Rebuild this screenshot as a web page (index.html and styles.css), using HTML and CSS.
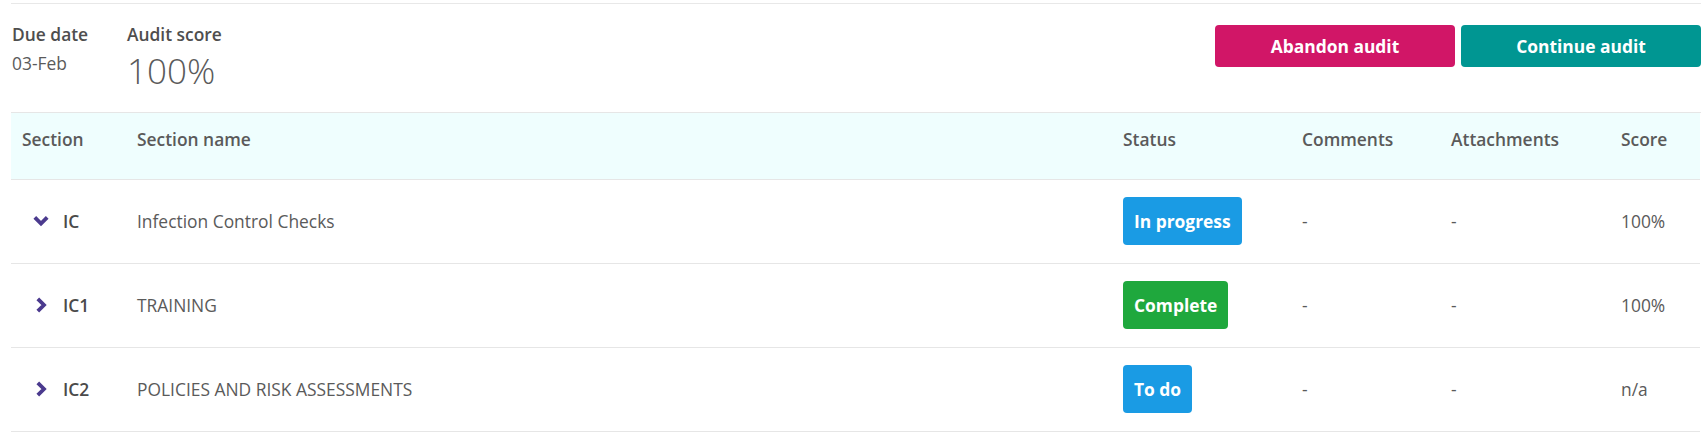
FILE: index.html
```html
<!DOCTYPE html>
<html lang="en">
<head>
    <meta charset="UTF-8">
    <meta name="viewport" content="width=device-width, initial-scale=1.0">
    <title>Audit</title>
    <link rel="stylesheet" href="styles.css">
</head>
<body>
    <div class="audit">
        <div class="summary">
            <div class="facts">
                <div class="fact due">
                    <div class="fact-label">Due date</div>
                    <div class="fact-value">03-Feb</div>
                </div>
                <div class="fact">
                    <div class="fact-label">Audit score</div>
                    <div class="fact-value big">100%</div>
                </div>
            </div>
            <div class="actions">
                <button class="button abandon">Abandon audit</button>
                <button class="button continue">Continue audit</button>
            </div>
        </div>

        <div class="sections">
            <div class="row head">
                <div class="cell">Section</div>
                <div class="cell">Section name</div>
                <div class="cell">Status</div>
                <div class="cell">Comments</div>
                <div class="cell">Attachments</div>
                <div class="cell">Score</div>
            </div>

            <div class="row">
                <div class="cell code">
                    <span class="toggle">
                        <svg width="16" height="16" viewBox="0 0 16 16"><path d="M1.8 4.3 L8 10.5 L14.2 4.3" fill="none" stroke="#4b3a8e" stroke-width="3.8"/></svg>
                    </span>
                    IC
                </div>
                <div class="cell">Infection Control Checks</div>
                <div class="cell"><span class="badge blue">In progress</span></div>
                <div class="cell">-</div>
                <div class="cell">-</div>
                <div class="cell">100%</div>
            </div>

            <div class="row">
                <div class="cell code">
                    <span class="toggle">
                        <svg width="16" height="16" viewBox="0 0 16 16"><path d="M4.8 1.8 L11 8 L4.8 14.2" fill="none" stroke="#4b3a8e" stroke-width="3.8"/></svg>
                    </span>
                    IC1
                </div>
                <div class="cell">TRAINING</div>
                <div class="cell"><span class="badge green">Complete</span></div>
                <div class="cell">-</div>
                <div class="cell">-</div>
                <div class="cell">100%</div>
            </div>

            <div class="row">
                <div class="cell code">
                    <span class="toggle">
                        <svg width="16" height="16" viewBox="0 0 16 16"><path d="M4.8 1.8 L11 8 L4.8 14.2" fill="none" stroke="#4b3a8e" stroke-width="3.8"/></svg>
                    </span>
                    IC2
                </div>
                <div class="cell">POLICIES AND RISK ASSESSMENTS</div>
                <div class="cell"><span class="badge blue">To do</span></div>
                <div class="cell">-</div>
                <div class="cell">-</div>
                <div class="cell">n/a</div>
            </div>
        </div>
    </div>
</body>
</html>
```

FILE: styles.css
```css
body {
    font-family: "Open Sans", Arial, sans-serif;
    font-size: 17.4px;
    line-height: 24px;
    color: #5a5a5a;
    margin: 0;
    background-color: #fff;
}

.audit {
    padding: 3px 3px 0 11px;
}

.summary {
    display: flex;
    justify-content: space-between;
    align-items: flex-start;
    height: 110px;
    border-top: 1px solid #e8e8e8;
    border-bottom: 1px solid #e6e6e6;
    box-sizing: border-box;
}

.facts {
    display: flex;
    padding-top: 18px;
}

.fact.due {
    width: 115px;
}

.fact-label {
    font-weight: 600;
    color: #4e4e4e;
    margin-left: 1px;
    margin-bottom: 5px;
}

.fact-value {
    margin-left: 1px;
    color: #5a5a5a;
}

.fact-value.big {
    font-size: 35px;
    font-weight: 300;
    line-height: 42px;
    margin-top: -1px;
}

.actions {
    display: flex;
    gap: 6px;
    padding-top: 21px;
}

.button {
    font-family: inherit;
    font-size: 17.4px;
    font-weight: 700;
    color: #fff;
    width: 240px;
    height: 42px;
    border: none;
    border-radius: 4px;
    cursor: pointer;
}

.button.abandon {
    background-color: #d11667;
}

.button.continue {
    background-color: #009692;
}

.sections {
    margin-right: 1px;
}

.row {
    display: grid;
    grid-template-columns: 115px 986px 179px 149px 170px 1fr;
    align-items: center;
    min-height: 81px;
    padding-bottom: 2px;
    border-bottom: 1px solid #e6e6e6;
}

.row.head {
    align-items: start;
    min-height: 0;
    padding-bottom: 0;
    background-color: #effefe;
    font-weight: 600;
    color: #5a5a5a;
}

.row.head .cell {
    padding-top: 14px;
    padding-bottom: 28px;
}

.cell {
    padding-left: 11px;
}

.cell.code {
    display: flex;
    align-items: center;
    gap: 14px;
    padding-left: 22px;
    font-weight: 600;
    color: #4a4a4a;
}

.toggle {
    display: flex;
    width: 16px;
    height: 16px;
}

.badge {
    display: inline-block;
    padding: 12px 11px;
    border-radius: 4px;
    color: #fff;
    font-weight: 700;
}

.badge.blue {
    background-color: #1a9be4;
}

.badge.green {
    background-color: #1fa83d;
}
```
